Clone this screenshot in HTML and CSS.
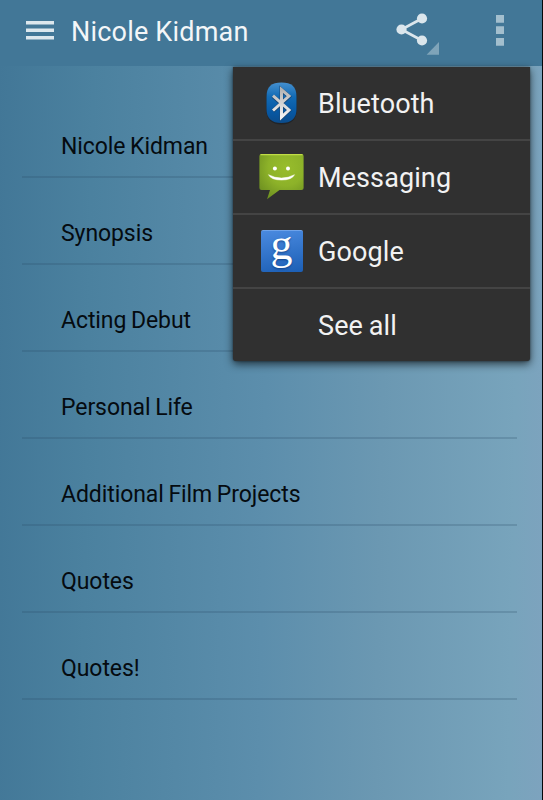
FILE: index.html
```html
<!DOCTYPE html>
<html lang="en">
<head>
  <meta charset="UTF-8">
  <meta name="viewport" content="width=device-width, initial-scale=1.0">
  <title>Nicole Kidman</title>
  <link rel="stylesheet" href="styles.css">
</head>
<body>
  <div class="screen">
    <header class="action-bar">
      <svg class="menu-icon" width="28" height="19" viewBox="0 0 28 19">
        <path d="M0 0h28v3.6H0zM0 7.5h28v3.6H0zM0 15h28v3.6H0z" fill="#dce7ed"/>
      </svg>
      <h1 class="title">Nicole Kidman</h1>
      <div class="share">
        <svg width="44" height="44" viewBox="0 0 44 44">
          <path d="M27 7.5L6.5 18.5L27 29.5" fill="none" stroke="#dbe6ec" stroke-width="2.7"/>
          <circle cx="27" cy="7.5" r="5.1" fill="#dbe6ec"/>
          <circle cx="6.5" cy="18.5" r="5.1" fill="#dbe6ec"/>
          <circle cx="27" cy="29.5" r="5.1" fill="#dbe6ec"/>
          <path d="M44 31v12.7H31.6z" fill="#7fa4b9"/>
        </svg>
      </div>
      <svg class="overflow-icon" width="8" height="31" viewBox="0 0 8 31">
        <path d="M0 0h8v7.7H0zM0 11.3h8V19H0zM0 23h8v7.7H0z" fill="#a3bfce"/>
      </svg>
    </header>

    <ul class="list">
      <li class="list-item">Nicole Kidman</li>
      <li class="list-item">Synopsis</li>
      <li class="list-item">Acting Debut</li>
      <li class="list-item">Personal Life</li>
      <li class="list-item">Additional Film Projects</li>
      <li class="list-item">Quotes</li>
      <li class="list-item">Quotes!</li>
    </ul>

    <div class="share-menu">
      <div class="menu-item">
        <span class="app-icon">
          <svg width="48" height="48" viewBox="0 0 48 48">
            <defs>
              <linearGradient id="bt" x1="0" y1="0" x2="0" y2="1">
                <stop offset="0" stop-color="#4590cf"/>
                <stop offset="0.35" stop-color="#126bb5"/>
                <stop offset="0.7" stop-color="#0759a5"/>
                <stop offset="1" stop-color="#0b4c8c"/>
              </linearGradient>
              <linearGradient id="silver" x1="0" y1="0" x2="0" y2="1">
                <stop offset="0" stop-color="#b4b4b4"/>
                <stop offset="1" stop-color="#f4f4f4"/>
              </linearGradient>
            </defs>
            <path d="M24.500 4.500C35 4.500 39.600 9 39.600 19v12c0 9-5 14.500-15.100 14.500S9.400 40 9.400 31V19C9.400 9 14 4.500 24.500 4.500z" fill="#202327"/>
            <path d="M24.500 3.500C34.500 3.500 39.500 7.500 39.500 18v12c0 9.500-5 14-15 14s-15-4.500-15-14V18c0-10.500 5-14.500 15-14.500z" fill="url(#bt)"/>
            <path d="M16 17.200L32 31.500L24.500 38.300V11L32 17.500L16 32" fill="none" stroke="#174878" stroke-width="4"/>
            <path d="M16 16.700L32 31L24.500 38V10.500L32 17L16 31.500" fill="none" stroke="url(#silver)" stroke-width="3"/>
          </svg>
        </span>
        <span class="label">Bluetooth</span>
      </div>
      <div class="menu-item">
        <span class="app-icon">
          <svg width="48" height="48" viewBox="0 0 48 48">
            <defs>
              <radialGradient id="msg" cx="0.6" cy="0.3" r="0.8">
                <stop offset="0" stop-color="#98bd2c"/>
                <stop offset="0.5" stop-color="#8db229"/>
                <stop offset="1" stop-color="#6b8d20"/>
              </radialGradient>
            </defs>
            <path d="M4.500 1H44.500Q46.600 1 46.600 3V35Q46.600 37 44.500 37H22.500L10 46.300L13 37H4.500Q2.400 37 2.400 35V3Q2.400 1 4.500 1z" fill="url(#msg)"/>
            <path d="M3.500 1.600H45.500" stroke="#c0dc46" stroke-width="1.300"/>
            <circle cx="17.900" cy="15.400" r="2" fill="#fff"/>
            <circle cx="31" cy="15.400" r="2" fill="#fff"/>
            <path d="M11.500 21.700Q24.500 28.500 37.500 21.700Q35 27 24.500 27Q14 27 11.500 21.700z" fill="#fff" stroke="#fff" stroke-width="0.500"/>
          </svg>
        </span>
        <span class="label">Messaging</span>
      </div>
      <div class="menu-item">
        <span class="app-icon"><span class="google-icon">g</span></span>
        <span class="label">Google</span>
      </div>
      <div class="menu-item">
        <span class="app-icon"></span>
        <span class="label">See all</span>
      </div>
    </div>
  </div>
</body>
</html>
```
FILE: styles.css
```css
* {
  margin: 0;
  padding: 0;
  box-sizing: border-box;
}

body {
  font-family: Roboto, sans-serif;
  background-color: #427797;
}

.screen {
  position: relative;
  width: 543px;
  height: 800px;
  overflow: hidden;
  border-right: 1px solid #05080a;
  background: linear-gradient(91deg, #427797 0%, #4b819f 17%, #5c8eac 49%, #6b98b2 70%, #78a4bc 94%, #7da3be 100%);
}

/* Top bar */
.action-bar {
  display: flex;
  align-items: flex-start;
  height: 66px;
  padding-left: 26px;
  background: #427797;
}

.menu-icon {
  margin-top: 21px;
}

.title {
  width: 324px;
  margin-left: 17px;
  line-height: 64px;
  font-size: 27px;
  font-weight: 400;
  letter-spacing: 0.2px;
  color: #f3f6f8;
}

.share {
  margin-top: 11px;
}

.overflow-icon {
  margin-top: 15px;
  margin-left: 56.5px;
}

/* Page list */
.list {
  list-style: none;
  padding: 25px 25px 0 22px;
}

.list-item {
  height: 87px;
  padding-left: 39px;
  line-height: 112px;
  font-size: 23px;
  letter-spacing: -0.08px;
  word-spacing: -1px;
  color: #050b10;
  border-bottom: 2px solid rgba(40, 75, 100, 0.22);
}

/* Share dropdown, lies over the list */
.share-menu {
  position: absolute;
  top: 67px;
  left: 233px;
  width: 297px;
  background: #303030;
  border-radius: 0 0 3px 3px;
  box-shadow: 0 3px 8px rgba(0, 0, 0, 0.65), 0 0 2px rgba(0, 0, 0, 0.5);
}

.menu-item {
  display: flex;
  align-items: center;
  height: 74px;
  padding-left: 24px;
  border-bottom: 2px solid #444;
}

.menu-item:last-child {
  height: 72px;
  border-bottom: none;
}

.app-icon {
  display: flex;
  align-items: center;
  justify-content: center;
  width: 48px;
  height: 48px;
  margin-right: 13px;
}

.label {
  padding-top: 2px;
  font-size: 27px;
  line-height: 70px;
  letter-spacing: 0.1px;
  word-spacing: -1px;
  color: #f2f2f2;
}

.google-icon {
  width: 42px;
  height: 42px;
  margin-top: -1px;
  margin-left: 1px;
  border-radius: 2px;
  border-top: 1px solid #6fa3ea;
  background: linear-gradient(170deg, #4a8ae0, #1c5fb5);
  font-family: "Liberation Serif", serif;
  font-size: 44px;
  line-height: 28px;
  text-align: center;
  color: #fff;
  text-shadow: 0 1px 2px rgba(10, 50, 110, 0.7);
}
```
